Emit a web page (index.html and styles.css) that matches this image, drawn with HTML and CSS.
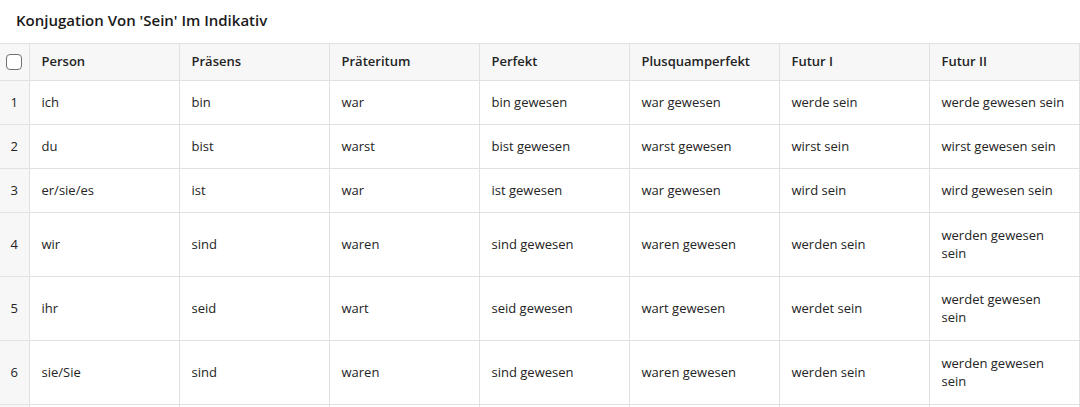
FILE: index.html
```html
<!DOCTYPE html>
<html lang="de">
<head>
<meta charset="utf-8">
<title>Konjugation</title>
<link rel="stylesheet" href="styles.css">
</head>
<body>
<div class="page">
  <h1 class="title">Konjugation Von 'Sein' Im Indikativ</h1>
  <div class="grid-wrap">
    <table class="grid">
      <colgroup>
        <col class="c-idx">
        <col class="c-col"><col class="c-col"><col class="c-col"><col class="c-col"><col class="c-col"><col class="c-col"><col class="c-col">
      </colgroup>
      <thead>
        <tr>
          <th class="idx"><span class="check"></span></th>
          <th>Person</th><th>Präsens</th><th>Präteritum</th><th>Perfekt</th><th>Plusquamperfekt</th><th>Futur I</th><th>Futur II</th>
        </tr>
      </thead>
      <tbody>
        <tr><td class="idx">1</td><td>ich</td><td>bin</td><td>war</td><td>bin gewesen</td><td>war gewesen</td><td>werde sein</td><td>werde gewesen sein</td></tr>
        <tr><td class="idx">2</td><td>du</td><td>bist</td><td>warst</td><td>bist gewesen</td><td>warst gewesen</td><td>wirst sein</td><td>wirst gewesen sein</td></tr>
        <tr><td class="idx">3</td><td>er/sie/es</td><td>ist</td><td>war</td><td>ist gewesen</td><td>war gewesen</td><td>wird sein</td><td>wird gewesen sein</td></tr>
        <tr class="tall"><td class="idx">4</td><td>wir</td><td>sind</td><td>waren</td><td>sind gewesen</td><td>waren gewesen</td><td>werden sein</td><td>werden gewesen sein</td></tr>
        <tr class="tall"><td class="idx">5</td><td>ihr</td><td>seid</td><td>wart</td><td>seid gewesen</td><td>wart gewesen</td><td>werdet sein</td><td>werdet gewesen sein</td></tr>
        <tr class="tall"><td class="idx">6</td><td>sie/Sie</td><td>sind</td><td>waren</td><td>sind gewesen</td><td>waren gewesen</td><td>werden sein</td><td>werden gewesen sein</td></tr>
        <tr><td class="idx"></td><td></td><td></td><td></td><td></td><td></td><td></td><td></td></tr>
      </tbody>
    </table>
  </div>
</div>
</body>
</html>
```
FILE: styles.css
```css
* { box-sizing: border-box; }
html, body { margin: 0; padding: 0; background: #fff; }
body {
  font-family: "Open Sans", "Noto Sans", Arial, sans-serif;
  color: #242424;
  font-size: 13px;
}
.page {
  width: 1080px;
  height: 407px;
  overflow: hidden;
}
.title {
  margin: 0;
  height: 43px;
  padding: 0 16px 4px;
  display: flex;
  align-items: center;
  font-size: 15px;
  font-weight: 600;
  color: #1a1a1a;
}
.grid-wrap { width: 1080px; }
.grid {
  border-collapse: collapse;
  table-layout: fixed;
  width: 1079px;
}
.c-idx { width: 29px; }
.c-col { width: 150px; }
.grid th, .grid td {
  border: 1px solid #e1e1e1;
  padding: 0 12px 2px;
  text-align: left;
  vertical-align: middle;
  line-height: 18px;
}
.grid th {
  height: 37px;
  background: #f7f7f7;
  font-weight: 600;
  color: #242424;
}
.grid th:first-child, .grid td:first-child { border-left: none; }
.grid td { height: 44px; }
.grid .tall td { height: 64px; }
.grid .idx {
  padding: 0 0 2px;
  text-align: center;
  background: #f7f7f7;
}
.check {
  display: inline-block;
  width: 16px;
  height: 16px;
  border: 1px solid #6f6f6f;
  border-radius: 4px;
  background: #fff;
  vertical-align: middle;
}
```
